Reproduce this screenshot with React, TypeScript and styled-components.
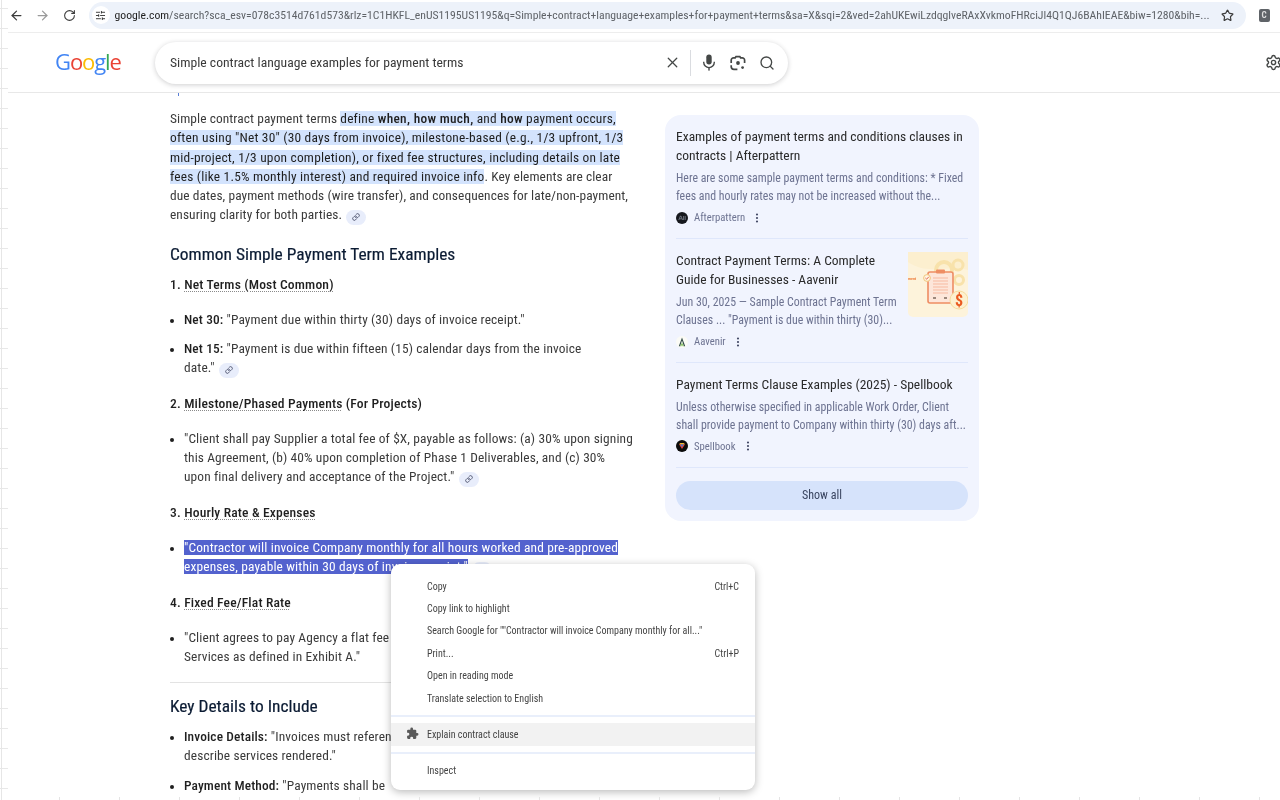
import React from "react";
import styled, { createGlobalStyle } from "styled-components";
import { ArrowLeft, ArrowRight, Link as LinkIcon, MoreVertical, RotateCw, Search, Settings, SlidersHorizontal, Star, X } from "lucide-react";

const GlobalStyle = createGlobalStyle`
  html, body { margin: 0; padding: 0; background: #fff; }
  * { box-sizing: border-box; }
  body { font-family: Roboto, "Liberation Sans", sans-serif; font-stretch: 87%; color: #1f1f1f; }
`;

const sources = [
  {
    title: "Examples of payment terms and conditions clauses in contracts | Afterpattern",
    snippet: "Here are some sample payment terms and conditions: * Fixed fees and hourly rates may not be increased without the...",
    name: "Afterpattern",
    logo: "after",
  },
  {
    title: "Contract Payment Terms: A Complete Guide for Businesses - Aavenir",
    snippet: "Jun 30, 2025 — Sample Contract Payment Term Clauses ... \"Payment is due within thirty (30)...",
    name: "Aavenir",
    logo: "aavenir",
    thumb: true,
  },
  {
    title: "Payment Terms Clause Examples (2025) - Spellbook",
    snippet: "Unless otherwise specified in applicable Work Order, Client shall provide payment to Company within thirty (30) days aft...",
    name: "Spellbook",
    logo: "spell",
  },
];

const SourceLogo = ({ kind }: { kind: string }) => {
  if (kind === "aavenir") {
    return (
      <svg width="12" height="12" viewBox="0 0 12 12">
        <circle cx="6" cy="6" r="6" fill="#fbfbf6" />
        <path d="M6 1.6 2.8 10.2h1.3L6 4.6l1.9 5.6h1.3z" fill="#2f4a45" />
        <path d="M4.2 10.2h1.2l.6-1.8.6 1.8h1.2L6 6.4z" fill="#7fbf5a" />
      </svg>
    );
  }
  if (kind === "spell") {
    return (
      <svg width="12" height="12" viewBox="0 0 12 12">
        <circle cx="6" cy="6" r="6" fill="#0b0b0b" />
        <path d="M3 4.2h6L6 9z" fill="#e8473f" />
        <path d="M4.2 4.2h3.6L6 7z" fill="#3d7be0" />
        <path d="M3 4.2 4.2 3h3.6L9 4.2z" fill="#f1b92f" />
      </svg>
    );
  }
  return (
    <svg width="12" height="12" viewBox="0 0 12 12">
      <circle cx="6" cy="6" r="6" fill="#16181d" />
      <path d="M2.8 8 4.4 4h.6l1.6 4M3.6 6.8h2.2M7.6 4v4M9.2 4v4" stroke="#8d93a0" strokeWidth=".7" fill="none" />
    </svg>
  );
};

const ThumbArt = () => (
  <svg width="60" height="65" viewBox="0 0 60 65">
    <rect width="60" height="65" rx="5" fill="#fdf3db" />
    <path d="M0 0h60v18C40 12 20 24 0 10z" fill="#fcefcf" />
    <g fill="none" stroke="#f8e2ab">
      <circle cx="36" cy="18" r="8" strokeWidth="4" />
      <circle cx="50" cy="13" r="5" strokeWidth="3" />
      <circle cx="51" cy="28" r="4.5" strokeWidth="3" />
    </g>
    <rect x="20" y="20" width="25" height="31" rx="2" fill="#fde6da" stroke="#ee8d63" strokeWidth="1.6" />
    <rect x="28" y="17.5" width="9" height="4" rx="1" fill="#ee8d63" />
    <path d="M25 26h15M25 29h15M25 32h15M25 35h15M25 38h15M25 41h15" stroke="#f7b9a0" strokeWidth="1" />
    <path d="M25 46h3M36 46h3" stroke="#7d6a5e" strokeWidth="1.4" />
    <circle cx="19" cy="26" r="3.4" fill="#fff5e2" stroke="#f2c77d" />
    <path d="m17.4 26 1.2 1.2 2.2-2.4" stroke="#e0553a" strokeWidth=".9" fill="none" />
    <circle cx="51" cy="48" r="9" fill="#fdf0cf" stroke="#f6dc9c" />
    <text x="51" y="54" textAnchor="middle" fontFamily="Roboto, sans-serif" fontWeight="700" fontSize="16" fill="#ea5a20">$</text>
    <text x="0" y="28" fontFamily="Roboto, sans-serif" fontSize="4" fontWeight="700" fill="#ee8040">ment</text>
  </svg>
);

const MicIcon = () => (
  <svg width="16" height="17" viewBox="0 0 15 17" fill="#444746">
    <rect x="4.8" y="0.5" width="5.4" height="10" rx="2.7" />
    <path d="M2.2 7.8v.5a5.3 5.3 0 0 0 10.6 0v-.5" fill="none" stroke="#444746" strokeWidth="1.4" />
    <rect x="6.8" y="13" width="1.4" height="3.6" />
  </svg>
);

const LensIcon = () => (
  <svg width="16" height="16" viewBox="0 0 16 16" fill="none" stroke="#444746" strokeWidth="1.7">
    <path d="M1.2 8V5.2a2.4 2.4 0 0 1 2.4-2.4h1.6l.8-1.2h3.8l.8 1.2h1.6a2.4 2.4 0 0 1 2.4 2.4V8" />
    <path d="M1.2 10.2v1.4a2.8 2.8 0 0 0 2.8 2.8h3.4" />
    <circle cx="8" cy="8" r="1.9" fill="#444746" stroke="none" />
    <circle cx="12.6" cy="12.6" r="1.4" fill="#444746" stroke="none" />
  </svg>
);

const PuzzleIcon = () => (
  <svg width="13" height="13" viewBox="0 0 24 24" fill="#5a5a5a">
    <path d="M20.5 11H19V7a2 2 0 0 0-2-2h-4V3.5a2.5 2.5 0 0 0-5 0V5H4a2 2 0 0 0-2 2v3.8h1.5a2.7 2.7 0 0 1 0 5.4H2V20a2 2 0 0 0 2 2h3.8v-1.5a2.7 2.7 0 0 1 5.4 0V22H17a2 2 0 0 0 2-2v-4h1.5a2.5 2.5 0 0 0 0-5z" />
  </svg>
);

const Chip = () => (
  <LinkChip>
    <LinkIcon size={8} strokeWidth={2.6} />
  </LinkChip>
);

export default function App() {
  return (
    <Page>
      <GlobalStyle />
      <Toolbar>
        <NavIcon><ArrowLeft size={15} /></NavIcon>
        <NavIcon $muted><ArrowRight size={15} /></NavIcon>
        <NavIcon><RotateCw size={13} /></NavIcon>
        <UrlBar>
          <SiteInfo><SlidersHorizontal size={11} /></SiteInfo>
          <UrlText>
            google.com<span>/search?sca_esv=078c3514d761d573&amp;rlz=1C1HKFL_enUS1195US1195&amp;q=Simple+contract+language+examples+for+payment+terms&amp;sa=X&amp;sqi=2&amp;ved=2ahUKEwiLzdqglveRAxXvkmoFHRciJl4Q1QJ6BAhIEAE&amp;biw=1280&amp;bih=...</span>
          </UrlText>
          <Star size={13} color="#3c3c3c" strokeWidth={2.2} />
        </UrlBar>
        <ExtBadge>C</ExtBadge>
      </Toolbar>

      <Header>
        <Logo>
          <b style={{ color: "#4285f4" }}>G</b>
          <b style={{ color: "#ea4335" }}>o</b>
          <b style={{ color: "#fbbc05" }}>o</b>
          <b style={{ color: "#4285f4" }}>g</b>
          <b style={{ color: "#34a853" }}>l</b>
          <b style={{ color: "#ea4335" }}>e</b>
        </Logo>
        <SearchBox>
          <SearchText>Simple contract language examples for payment terms</SearchText>
          <ClearIcon><X size={17} color="#444746" strokeWidth={1.8} /></ClearIcon>
          <SearchDivider />
          <MicIcon />
          <LensIcon />
          <Search size={16} color="#444746" strokeWidth={2} />
        </SearchBox>
        <GearIcon><Settings size={17} /></GearIcon>
      </Header>

      <Body>
        <Main>
          <Para>
            Simple contract payment terms{" "}
            <Mark>
              define <strong>when, how much,</strong> and <strong>how</strong> payment occurs, often using "Net 30" (30 days from invoice), milestone-based (e.g., 1/3 upfront, 1/3 mid-project, 1/3 upon completion), or fixed fee structures, including details on late fees (like 1.5% monthly interest) and required invoice info
            </Mark>
            . Key elements are clear due&nbsp;dates, payment methods (wire transfer), and consequences for late/non-payment, ensuring clarity for both parties. <Chip />
          </Para>

          <Heading>Common Simple Payment Term Examples</Heading>
          <SubHeading>1. <u>Net Terms (Most Common)</u></SubHeading>
          <Bullets>
            <li><strong>Net 30:</strong> "Payment due within thirty (30) days of invoice receipt."</li>
            <li><strong>Net 15:</strong> "Payment is due within fifteen (15) calendar days from the invoice<br />date." <Chip /></li>
          </Bullets>

          <SubHeading>2. <u>Milestone/Phased Payments</u> (For Projects)</SubHeading>
          <Bullets>
            <li>"Client shall pay Supplier a total fee of $X, payable as follows: (a) 30% upon signing this Agreement, (b) 40% upon completion of Phase 1 Deliverables, and (c) 30% upon&nbsp;final delivery and acceptance of the Project." <Chip /></li>
          </Bullets>

          <SubHeading>3. <u>Hourly Rate &amp; Expenses</u></SubHeading>
          <Bullets>
            <li><Selected>"Contractor will invoice Company monthly for all hours worked and pre-approved expenses, payable within 30 days of invoice receipt."</Selected> <Chip /></li>
          </Bullets>

          <SubHeading>4. <u>Fixed Fee/Flat Rate</u></SubHeading>
          <Bullets>
            <li>"Client agrees to pay Agency a flat fee<br />Services as defined in Exhibit A."</li>
          </Bullets>

          <Rule />
          <Heading $tight>Key Details to Include</Heading>
          <Bullets $tight>
            <li><strong>Invoice Details:</strong> "Invoices must reference<br />describe services rendered."</li>
            <li><strong>Payment Method:</strong> "Payments shall be</li>
          </Bullets>
        </Main>

        <SidePanel>
          {sources.map((s) => (
            <SourceItem key={s.name}>
              <SourceTop>
                <div>
                  <SourceTitle>{s.title}</SourceTitle>
                  <SourceSnippet>{s.snippet}</SourceSnippet>
                </div>
                {s.thumb && <Thumb><ThumbArt /></Thumb>}
              </SourceTop>
              <SourceMeta>
                <SourceLogo kind={s.logo} />
                <span>{s.name}</span>
                <MoreVertical size={12} color="#444a66" strokeWidth={2.4} />
              </SourceMeta>
            </SourceItem>
          ))}
          <ShowAll>Show all</ShowAll>
        </SidePanel>
      </Body>

      <ContextMenu>
        <MenuRow><span>Copy</span><kbd>Ctrl+C</kbd></MenuRow>
        <MenuRow><span>Copy link to highlight</span></MenuRow>
        <MenuRow><span>Search Google for ""Contractor will invoice Company monthly for all..."</span></MenuRow>
        <MenuRow><span>Print...</span><kbd>Ctrl+P</kbd></MenuRow>
        <MenuRow><span>Open in reading mode</span></MenuRow>
        <MenuRow><span>Translate selection to English</span></MenuRow>
        <MenuRule />
        <MenuRow $active><MenuIcon><PuzzleIcon /></MenuIcon><span>Explain contract clause</span></MenuRow>
        <MenuRule />
        <MenuRow><span>Inspect</span></MenuRow>
      </ContextMenu>

      <LeftEdge />
      <BottomEdge />
    </Page>
  );
}

const Page = styled.div`
  position: relative;
  width: 1280px;
  height: 800px;
  overflow: hidden;
  background: #fff;
  filter: blur(0.3px);
`;
const LeftEdge = styled.div`
  position: absolute;
  left: 0;
  top: 0;
  width: 8px;
  height: 800px;
  background:
    linear-gradient(to right, #e6e6e6, #e6e6e6) 1px 0 / 1px 100% no-repeat,
    repeating-linear-gradient(to bottom, transparent 0 8px, #e8e8e8 8px 9px, transparent 9px 20px),
    #fff;
`;
const BottomEdge = styled.div`
  position: absolute;
  left: 0;
  bottom: 0;
  width: 1280px;
  height: 3px;
  background: repeating-linear-gradient(to right, transparent 0 59px, #e4e4e4 59px 60px);
`;
const Toolbar = styled.div`
  display: flex;
  align-items: center;
  height: 33px;
  padding: 0 0 2px 3px;
  border-bottom: 1px solid #ededed;
`;
const NavIcon = styled.span<{ $muted?: boolean }>`
  display: flex;
  width: 26.5px;
  justify-content: center;
  color: ${(p) => (p.$muted ? "#9a9a9a" : "#3c3c3c")};
`;
const UrlBar = styled.div`
  display: flex;
  align-items: center;
  width: 1157px;
  height: 27px;
  margin-left: 6px;
  padding: 0 0 0 3px;
  border-radius: 14px;
  background: #edf2fa;
`;
const SiteInfo = styled.span`
  display: flex;
  align-items: center;
  justify-content: center;
  width: 18px;
  height: 18px;
  border-radius: 50%;
  background: #fff;
  color: #333;
`;
const UrlText = styled.div`
  width: 1097px;
  margin: 0 9px 0 5px;
  font-size: 11.7px;
  white-space: nowrap;
  overflow: hidden;
  color: #1f1f1f;
  span { color: #5f6368; }
`;
const ExtBadge = styled.span`
  display: flex;
  align-items: center;
  justify-content: center;
  width: 11px;
  height: 13px;
  margin-left: 13px;
  border-radius: 2px;
  background: #5f6368;
  color: #ddd;
  font-size: 9px;
  font-weight: 700;
`;
const Header = styled.header`
  display: flex;
  align-items: center;
  height: 60px;
  padding: 0 0 0 55px;
  border-bottom: 1px solid #e8e8e8;
`;
const Logo = styled.div`
  flex: none;
  width: 100px;
  font-family: "Open Sans", sans-serif;
  font-stretch: 100%;
  font-size: 22px;
  letter-spacing: -1.1px;
  margin-top: -3px;
  b { font-weight: 400; }
`;
const SearchBox = styled.div`
  flex: none;
  display: flex;
  align-items: center;
  gap: 13px;
  width: 633px;
  height: 42px;
  padding: 0 13px 0 15px;
  border-radius: 21px;
  background: #fff;
  box-shadow: 0 1px 5px rgba(32, 33, 36, 0.22);
`;
const SearchText = styled.div`
  flex: 1;
  margin-top: -1px;
  font-size: 13.65px;
  color: #3a3a3a;
`;
const ClearIcon = styled.span`
  display: flex;
  margin-right: -4px;
`;
const SearchDivider = styled.span`
  width: 1px;
  height: 26px;
  margin-right: -3px;
  background: #dadce0;
`;
const GearIcon = styled.span`
  flex: none;
  display: flex;
  margin-left: 477px;
  color: #444746;
`;
const Body = styled.main`
  position: relative;
  display: flex;
  align-items: flex-start;
  padding: 16px 0 0 170px;
  &::before {
    content: "";
    position: absolute;
    left: 178px;
    top: 0;
    width: 1px;
    height: 3px;
    background: #5a7fd6;
  }
`;
const Main = styled.div`
  width: 466px;
  flex: none;
  font-size: 13.4px;
  letter-spacing: 0.12px;
  line-height: 19.25px;
  color: #3a3a3a;
  strong { font-weight: 500; color: #1f1f1f; }
`;
const Para = styled.p`
  margin: 0;
  letter-spacing: 0.08px;
`;
const Mark = styled.span`
  background: #d3e3fd;
  color: #1f1f1f;
  letter-spacing: 0.2px;
  strong { letter-spacing: 0.3px; }
`;
const Selected = styled.span`
  background: #5362ce;
  color: #fff;
  letter-spacing: 0.15px;
`;
const LinkChip = styled.span`
  display: inline-flex;
  align-items: center;
  justify-content: center;
  width: 20px;
  height: 15px;
  margin-left: 1px;
  vertical-align: -2px;
  border-radius: 8px;
  background: #e8edfb;
  color: #444a66;
`;
const Heading = styled.h2<{ $tight?: boolean }>`
  margin: ${(p) => (p.$tight ? "12px 0 10px" : "18px 0 10px")};
  font-size: 17.4px;
  letter-spacing: 0;
  line-height: 22px;
  font-weight: 400;
  color: #0b1b33;
  -webkit-text-stroke: 0.2px #0b1b33;
`;
const SubHeading = styled.h3`
  margin: 0;
  font-size: 13.6px;
  letter-spacing: 0.15px;
  line-height: 19px;
  font-weight: 500;
  color: #1f1f1f;
  u {
    text-decoration: underline dotted #8a8a8a 1px;
    text-underline-offset: 2px;
  }
`;
const Bullets = styled.ul<{ $tight?: boolean }>`
  margin: ${(p) => (p.$tight ? "0" : "16px 0")};
  padding: 0 0 0 14px;
  li { margin-bottom: 10px; }
  li::marker { font-size: 12px; color: #1f1f1f; }
`;
const Rule = styled.hr`
  margin: 0;
  border: 0;
  border-top: 1px solid #e3e3e3;
`;
const SidePanel = styled.aside`
  flex: none;
  width: 314px;
  height: 406px;
  margin: 6px 0 0 29px;
  padding: 12px 11px 11px;
  border-radius: 16px;
  background: #f1f4fe;
`;
const SourceItem = styled.article`
  padding-bottom: 14px;
  border-bottom: 1px solid #dfe7fb;
  & + & { padding-top: 12px; }
`;
const SourceTop = styled.div`
  display: flex;
  justify-content: space-between;
  gap: 8px;
`;
const SourceTitle = styled.div`
  font-size: 13.5px;
  line-height: 19.2px;
  color: #2a2a2a;
`;
const SourceSnippet = styled.div`
  margin-top: 5px;
  font-size: 11.85px;
  line-height: 17.8px;
  color: #6d7391;
`;
const Thumb = styled.div`
  flex: none;
  width: 60px;
  height: 65px;
  margin-top: 1px;
`;
const SourceMeta = styled.div`
  display: flex;
  align-items: center;
  gap: 6px;
  margin-top: 5px;
  font-size: 10.7px;
  color: #6d7391;
`;
const ShowAll = styled.button`
  display: block;
  width: 292px;
  height: 29px;
  margin-top: 13px;
  border: 0;
  border-radius: 15px;
  background: #d6e3fb;
  font-family: inherit;
  font-stretch: inherit;
  font-size: 12px;
  color: #3a4560;
`;
const ContextMenu = styled.div`
  position: absolute;
  left: 391px;
  top: 564px;
  width: 364px;
  height: 226px;
  padding: 11px 0 0;
  border-radius: 9px;
  background: #fff;
  box-shadow: 0 2px 9px rgba(0, 0, 0, 0.28);
  font-size: 10px;
  color: #444;
`;
const MenuRow = styled.div<{ $active?: boolean }>`
  position: relative;
  display: flex;
  align-items: center;
  justify-content: space-between;
  height: 22.4px;
  padding: 0 16px 0 36px;
  background: ${(p) => (p.$active ? "#f2f2f2" : "transparent")};
  kbd { font: inherit; }
`;
const MenuIcon = styled.span`
  position: absolute;
  left: 15px;
  top: 4px;
  display: flex;
`;
const MenuRule = styled.div`
  height: 2px;
  margin: 6px 0;
  background: #e9effb;
`;
